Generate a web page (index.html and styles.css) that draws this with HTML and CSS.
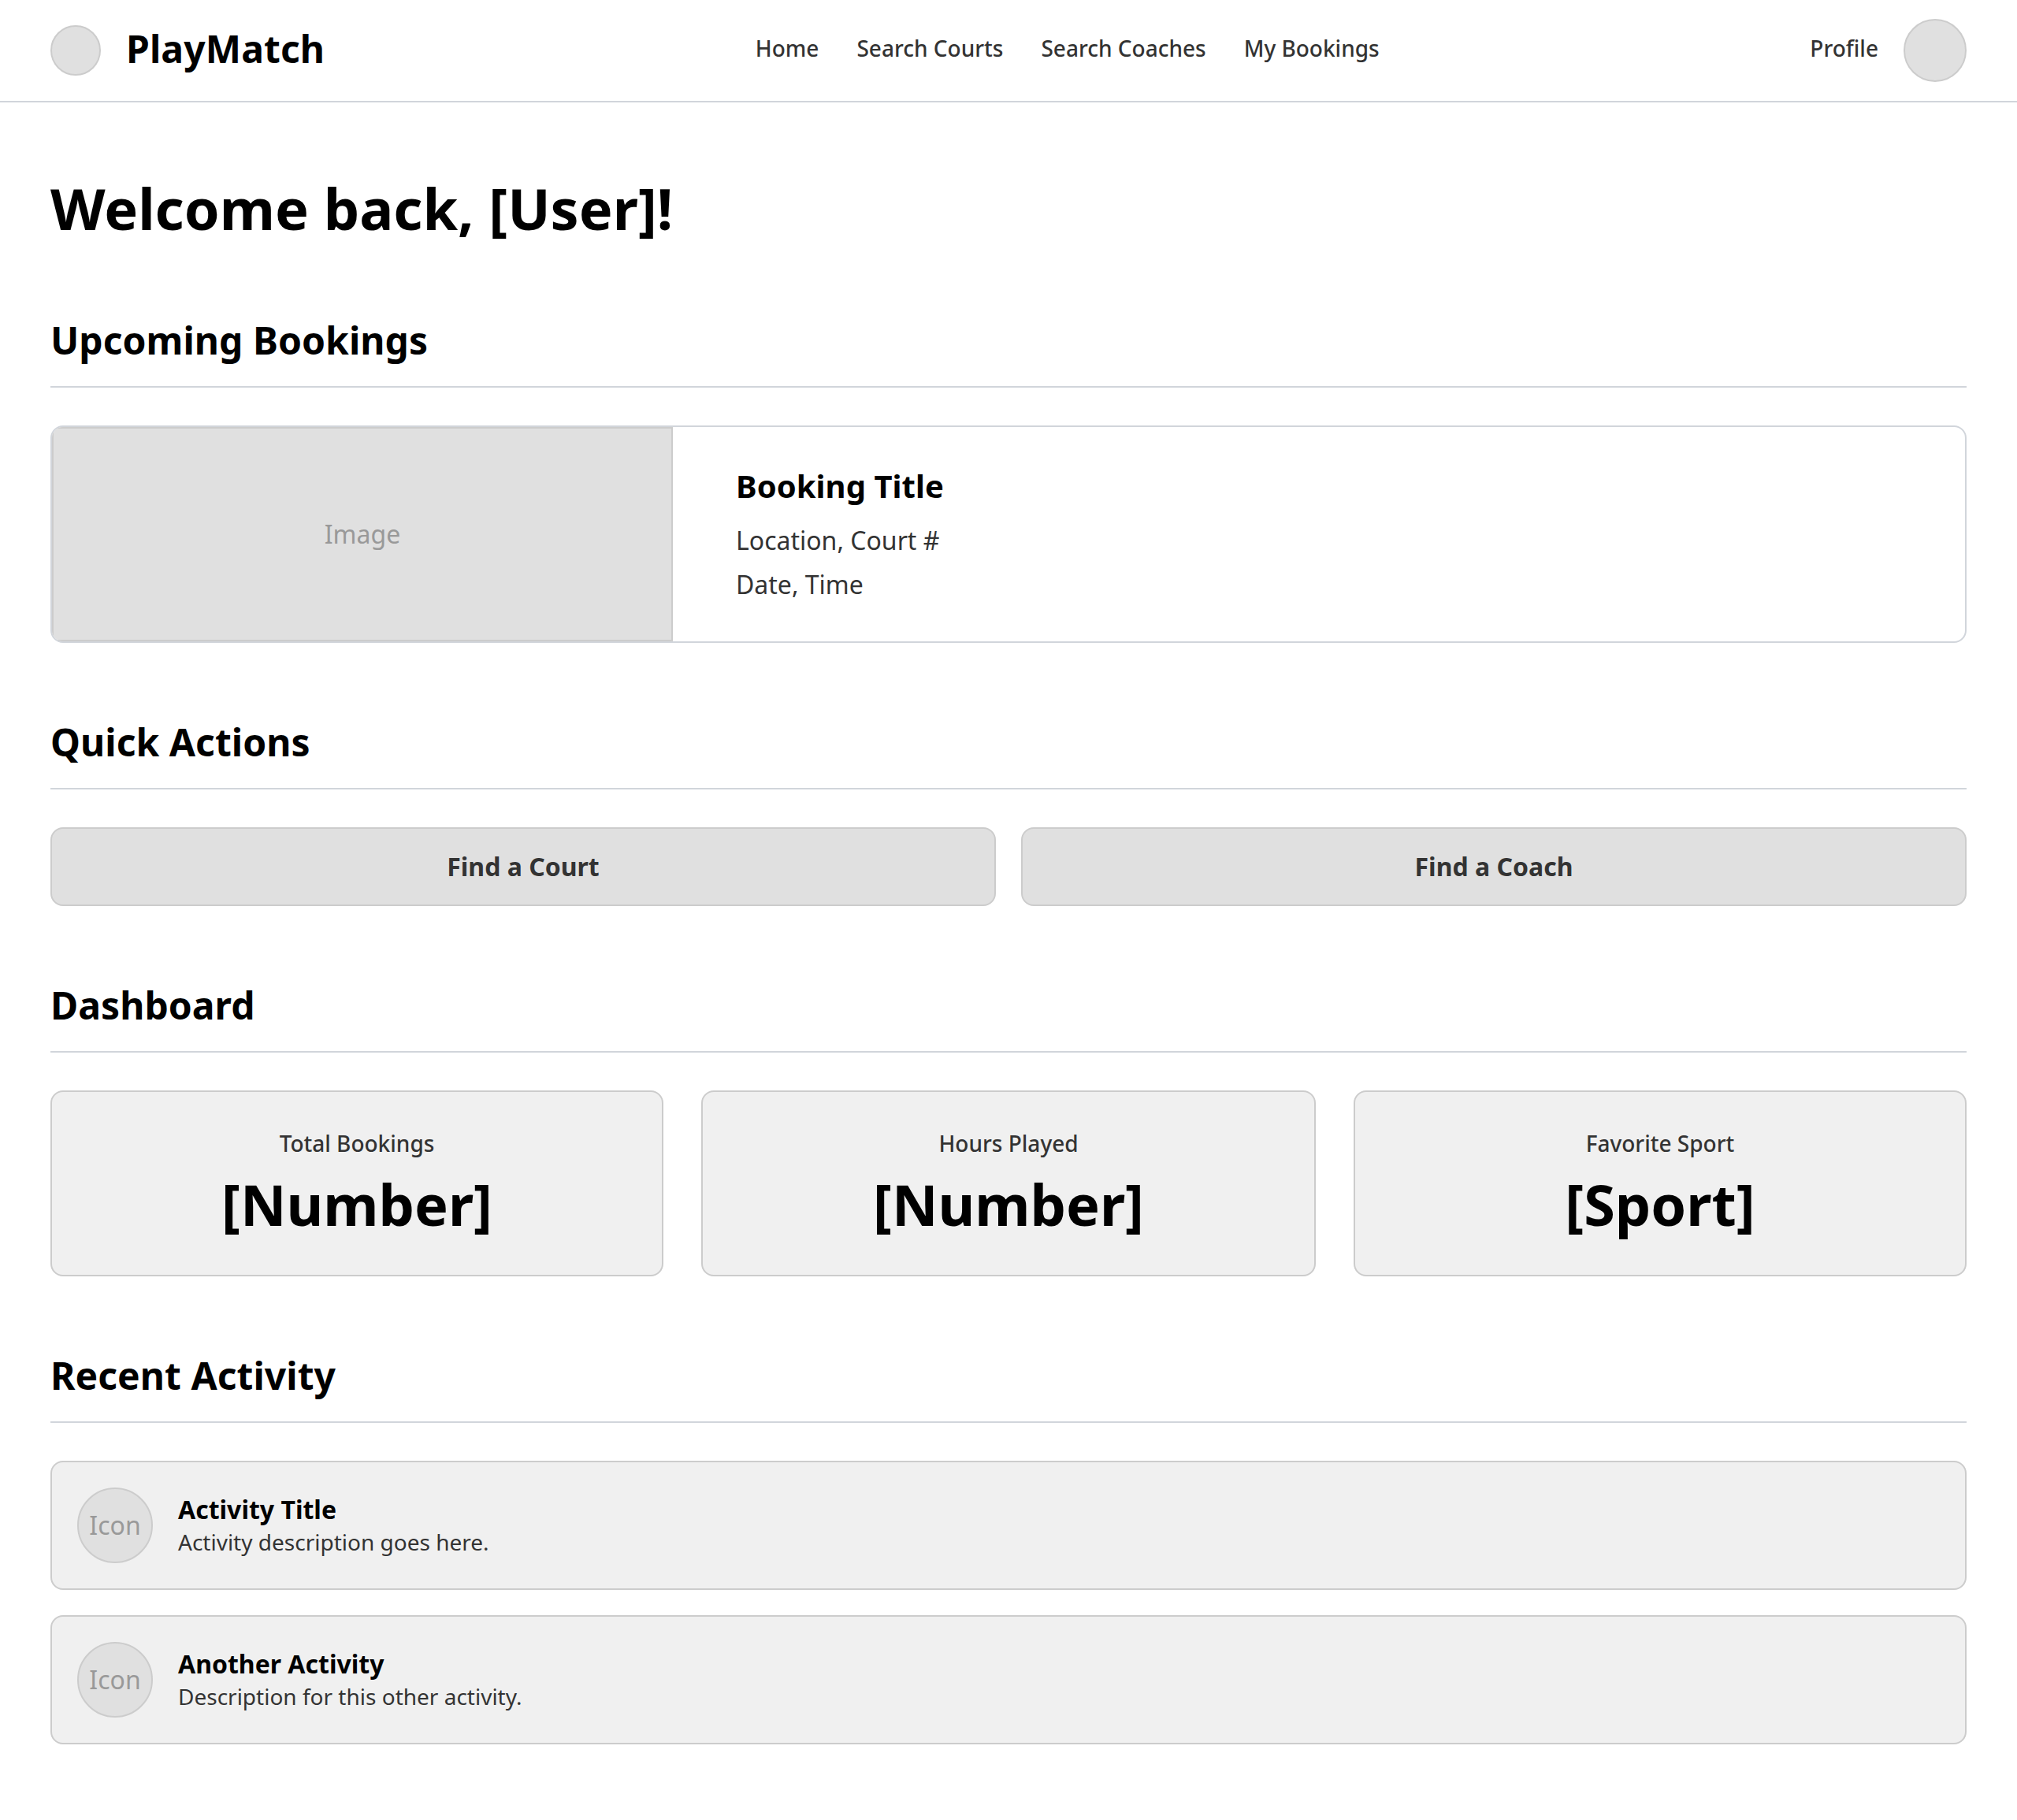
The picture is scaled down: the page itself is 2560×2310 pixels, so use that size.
FILE: index.html
```html
<!DOCTYPE html>
<html lang="en">
<head>
<meta charset="utf-8">
<title>PlayMatch</title>
<link rel="stylesheet" href="styles.css">
</head>
<body>
<header class="topbar">
  <div class="brand">
    <span class="brand-mark"></span>
    <span class="brand-name">PlayMatch</span>
  </div>
  <nav class="nav">
    <a>Home</a>
    <a>Search Courts</a>
    <a>Search Coaches</a>
    <a>My Bookings</a>
  </nav>
  <div class="profile">
    <a>Profile</a>
    <span class="avatar"></span>
  </div>
</header>
<main class="page">
  <h1 class="welcome">Welcome back, [User]!</h1>

  <section class="section">
    <h2 class="heading">Upcoming Bookings</h2>
    <article class="booking">
      <div class="booking-image">Image</div>
      <div class="booking-info">
        <h3 class="booking-title">Booking Title</h3>
        <p>Location, Court #</p>
        <p>Date, Time</p>
      </div>
    </article>
  </section>

  <section class="section">
    <h2 class="heading">Quick Actions</h2>
    <div class="actions">
      <button class="action">Find a Court</button>
      <button class="action">Find a Coach</button>
    </div>
  </section>

  <section class="section">
    <h2 class="heading">Dashboard</h2>
    <div class="stats">
      <div class="stat"><p class="stat-label">Total Bookings</p><p class="stat-value">[Number]</p></div>
      <div class="stat"><p class="stat-label">Hours Played</p><p class="stat-value">[Number]</p></div>
      <div class="stat"><p class="stat-label">Favorite Sport</p><p class="stat-value">[Sport]</p></div>
    </div>
  </section>

  <section class="section">
    <h2 class="heading">Recent Activity</h2>
    <div class="activities">
      <div class="activity">
        <div class="activity-icon">Icon</div>
        <div>
          <h3 class="activity-title">Activity Title</h3>
          <p class="activity-text">Activity description goes here.</p>
        </div>
      </div>
      <div class="activity">
        <div class="activity-icon">Icon</div>
        <div>
          <h3 class="activity-title">Another Activity</h3>
          <p class="activity-text">Description for this other activity.</p>
        </div>
      </div>
    </div>
  </section>
</main>
</body>
</html>
```
FILE: styles.css
```css
* { box-sizing: border-box; margin: 0; padding: 0; }

body {
  background: #fff;
  color: #333;
  font-family: "Noto Sans", sans-serif;
  font-size: 32px;
  line-height: 48px;
}

.topbar {
  display: flex;
  justify-content: space-between;
  align-items: center;
  height: 130px;
  padding: 0 64px;
  border-bottom: 2px solid #d1d5db;
}
.brand, .profile { display: flex; align-items: center; gap: 32px; }
.brand-mark, .avatar {
  border: 2px solid #ccc;
  border-radius: 50%;
  background: #e0e0e0;
}
.brand-mark { width: 64px; height: 64px; }
.avatar { width: 80px; height: 80px; }
.brand-name {
  padding-bottom: 5px;
  font-size: 48px;
  line-height: 60px;
  font-weight: 700;
  letter-spacing: 0.12px;
  color: #000;
}
.nav { display: flex; gap: 48px; }
.nav a, .profile a {
  padding-bottom: 6px;
  font-size: 28px;
  line-height: 42px;
  font-weight: 500;
}

.page { padding: 94px 64px 96px; }
.welcome {
  font-size: 72px;
  line-height: 80px;
  font-weight: 700;
  color: #000;
}
.section { margin-top: 96px; }
.welcome + .section { margin-top: 98px; }
.heading {
  height: 90px;
  margin-bottom: 48px;
  border-bottom: 2px solid #d1d5db;
  font-size: 48px;
  line-height: 60px;
  font-weight: 700;
  letter-spacing: 0.05px;
  color: #000;
}

.booking {
  display: flex;
  border: 2px solid #d1d5db;
  border-radius: 16px;
  overflow: hidden;
}
.booking-image {
  display: flex;
  align-items: center;
  justify-content: center;
  width: 788px;
  border: 2px solid #ccc;
  background: #e0e0e0;
  color: #999;
}
.booking-info {
  display: flex;
  flex-direction: column;
  gap: 8px;
  padding: 48px 80px;
}
.booking-title {
  margin-bottom: 10px;
  font-size: 40px;
  line-height: 54px;
  font-weight: 700;
  letter-spacing: 0.05px;
  color: #000;
}

.actions { display: grid; grid-template-columns: 1fr 1fr; gap: 32px; }
.action {
  height: 100px;
  border: 2px solid #ccc;
  border-radius: 16px;
  background: #e0e0e0;
  color: #333;
  font: 700 32px/48px "Noto Sans", sans-serif;
}

.stats { display: grid; grid-template-columns: 778px 780px 778px; gap: 48px; }
.stat {
  height: 236px;
  padding-top: 48px;
  border: 2px solid #ccc;
  border-radius: 16px;
  background: #f0f0f0;
  text-align: center;
}
.stat-label { font-size: 28px; line-height: 34px; font-weight: 500; }
.stat-value {
  margin-top: 20px;
  font-size: 72px;
  line-height: 80px;
  font-weight: 700;
  color: #000;
}

.activities { display: grid; gap: 32px; }
.activity {
  display: flex;
  align-items: center;
  gap: 32px;
  padding: 32px;
  border: 2px solid #ccc;
  border-radius: 16px;
  background: #f0f0f0;
}
.activity-icon {
  display: flex;
  align-items: center;
  justify-content: center;
  width: 96px;
  height: 96px;
  border: 2px solid #ccc;
  border-radius: 50%;
  background: #e0e0e0;
  color: #999;
}
.activity-title { font-size: 32px; line-height: 42px; font-weight: 700; color: #000; }
.activity-text { font-size: 28px; line-height: 40px; }
```
